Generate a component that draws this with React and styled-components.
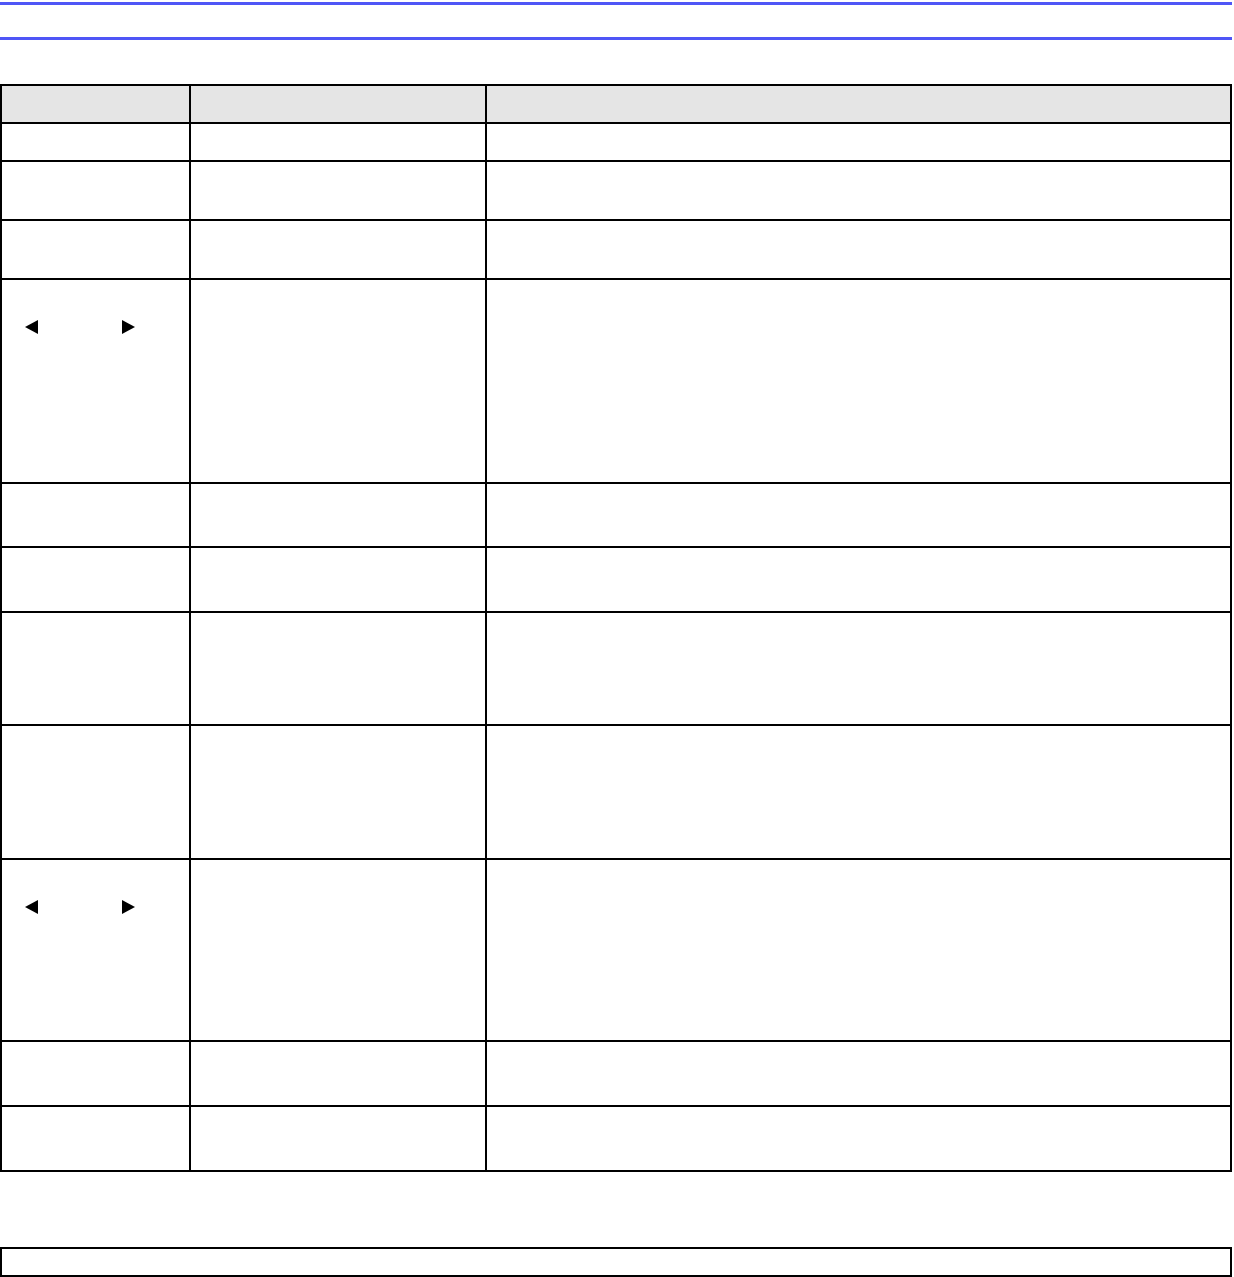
import React from "react";
import styled, { createGlobalStyle } from "styled-components";

const GlobalStyle = createGlobalStyle`
  html, body {
    margin: 0;
    padding: 0;
    background: #fff;
    font-family: "Liberation Sans", Arial, sans-serif;
  }
`;

const Page = styled.div`
  width: 1232px;
  padding-top: 2px;
`;

const TitleBar = styled.div`
  height: 32px;
  border-top: 3px solid #4f56f6;
  border-bottom: 3px solid #4f56f6;
`;

const Table = styled.table`
  margin-top: 44px;
  width: 1232px;
  border-collapse: collapse;
  table-layout: fixed;
`;

const Row = styled.tr`
  height: ${(p) => p.$h}px;
  background: ${(p) => (p.$head ? "#e5e5e5" : "#fff")};
`;

const Cell = styled.td`
  border: 2px solid #000;
  padding: 0;
  vertical-align: top;
  font-size: 14px;
`;

const Arrows = styled.div`
  display: flex;
  align-items: center;
  gap: 84px;
  padding: 40px 0 0 23px;
`;

const Tri = styled.span`
  width: 0;
  height: 0;
  border-top: 7px solid transparent;
  border-bottom: 7px solid transparent;
  ${(p) =>
    p.$dir === "left"
      ? "border-right: 13px solid #000;"
      : "border-left: 13px solid #000;"}
`;

const NoteBox = styled.div`
  margin-top: 75px;
  width: 1228px;
  height: 26px;
  border: 2px solid #000;
`;

const rows = [
  { h: 38 },
  { h: 59 },
  { h: 59 },
  { h: 204, arrows: true },
  { h: 64 },
  { h: 65 },
  { h: 113 },
  { h: 134 },
  { h: 182, arrows: true },
  { h: 65 },
  { h: 65 },
];

export default function App() {
  return (
    <Page>
      <GlobalStyle />
      <TitleBar />
      <Table>
        <colgroup>
          <col style={{ width: 189 }} />
          <col style={{ width: 296 }} />
          <col />
        </colgroup>
        <tbody>
          <Row $h={38} $head>
            <Cell />
            <Cell />
            <Cell />
          </Row>
          {rows.map((r, i) => (
            <Row key={i} $h={r.h}>
              <Cell>
                {r.arrows && (
                  <Arrows>
                    <Tri $dir="left" />
                    <Tri $dir="right" />
                  </Arrows>
                )}
              </Cell>
              <Cell />
              <Cell />
            </Row>
          ))}
        </tbody>
      </Table>
      <NoteBox />
    </Page>
  );
}
